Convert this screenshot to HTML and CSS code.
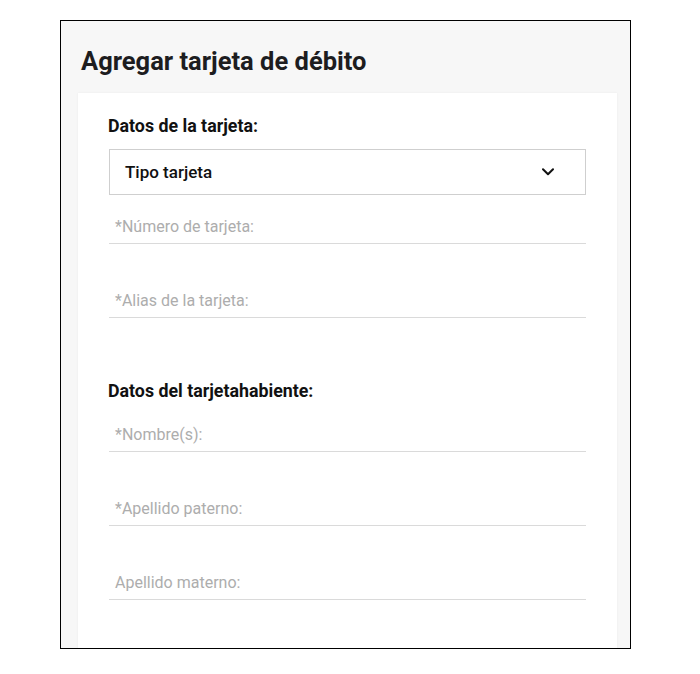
FILE: index.html
```html
<!DOCTYPE html>
<html lang="es">
<head>
<meta charset="utf-8">
<title>Agregar tarjeta de débito</title>
<link rel="stylesheet" href="styles.css">
</head>
<body>
<div class="frame">
  <h1 class="title">Agregar tarjeta de débito</h1>
  <div class="card">
    <h2 class="section-label">Datos de la tarjeta:</h2>
    <div class="select">
      <span class="select-text">Tipo tarjeta</span>
      <svg class="chevron" width="12" height="8" viewBox="0 0 12 8"><polyline points="1,1.2 6,6.2 11,1.2" fill="none" stroke="#111" stroke-width="2" stroke-linecap="round" stroke-linejoin="round"/></svg>
    </div>
    <div class="field field-first"><span class="placeholder">*Número de tarjeta:</span></div>
    <div class="field"><span class="placeholder">*Alias de la tarjeta:</span></div>

    <h2 class="section-label section-second">Datos del tarjetahabiente:</h2>
    <div class="field field-after-label"><span class="placeholder">*Nombre(s):</span></div>
    <div class="field"><span class="placeholder">*Apellido paterno:</span></div>
    <div class="field"><span class="placeholder">Apellido materno:</span></div>
  </div>
</div>
</body>
</html>
```

FILE: styles.css
```css
* { box-sizing: border-box; }

body {
  margin: 0;
  padding: 20px 0 0 60px;
  background: #ffffff;
  font-family: Roboto, "Liberation Sans", Arial, sans-serif;
}

.frame {
  width: 571px;
  height: 629px;
  border: 1px solid #000;
  background: #f7f7f7;
  overflow: hidden;
  padding: 25px 13px 0 17px;
}

.title {
  margin: 0 0 17px 3px;
  font-size: 25.5px;
  line-height: 30px;
  font-weight: 700;
  color: #1d1d1f;
}

.card {
  background: #ffffff;
  box-shadow: 0 0 2px rgba(0, 0, 0, 0.06);
  padding: 23px 31px 60px 31px;
  min-height: 600px;
}

.section-label {
  margin: 0 0 13px -1px;
  font-size: 17.8px;
  line-height: 20px;
  font-weight: 700;
  color: #111111;
}

.section-second {
  margin-top: 63px;
  margin-bottom: 10px;
}

.select {
  height: 46px;
  border: 1px solid #cfcfcf;
  display: flex;
  align-items: center;
  justify-content: space-between;
  padding: 0 31px 0 15px;
}

.select-text {
  font-size: 17px;
  font-weight: 500;
  color: #111111;
}

.chevron { display: block; }

.field {
  height: 41px;
  border-bottom: 1px solid #dadada;
  padding: 6px 6px 0 6px;
  display: flex;
  align-items: center;
  margin-top: 33px;
}

.field-first { margin-top: 8px; }
.field-after-label { margin-top: 0; }

.placeholder {
  font-size: 16px;
  color: #adadad;
}
```
